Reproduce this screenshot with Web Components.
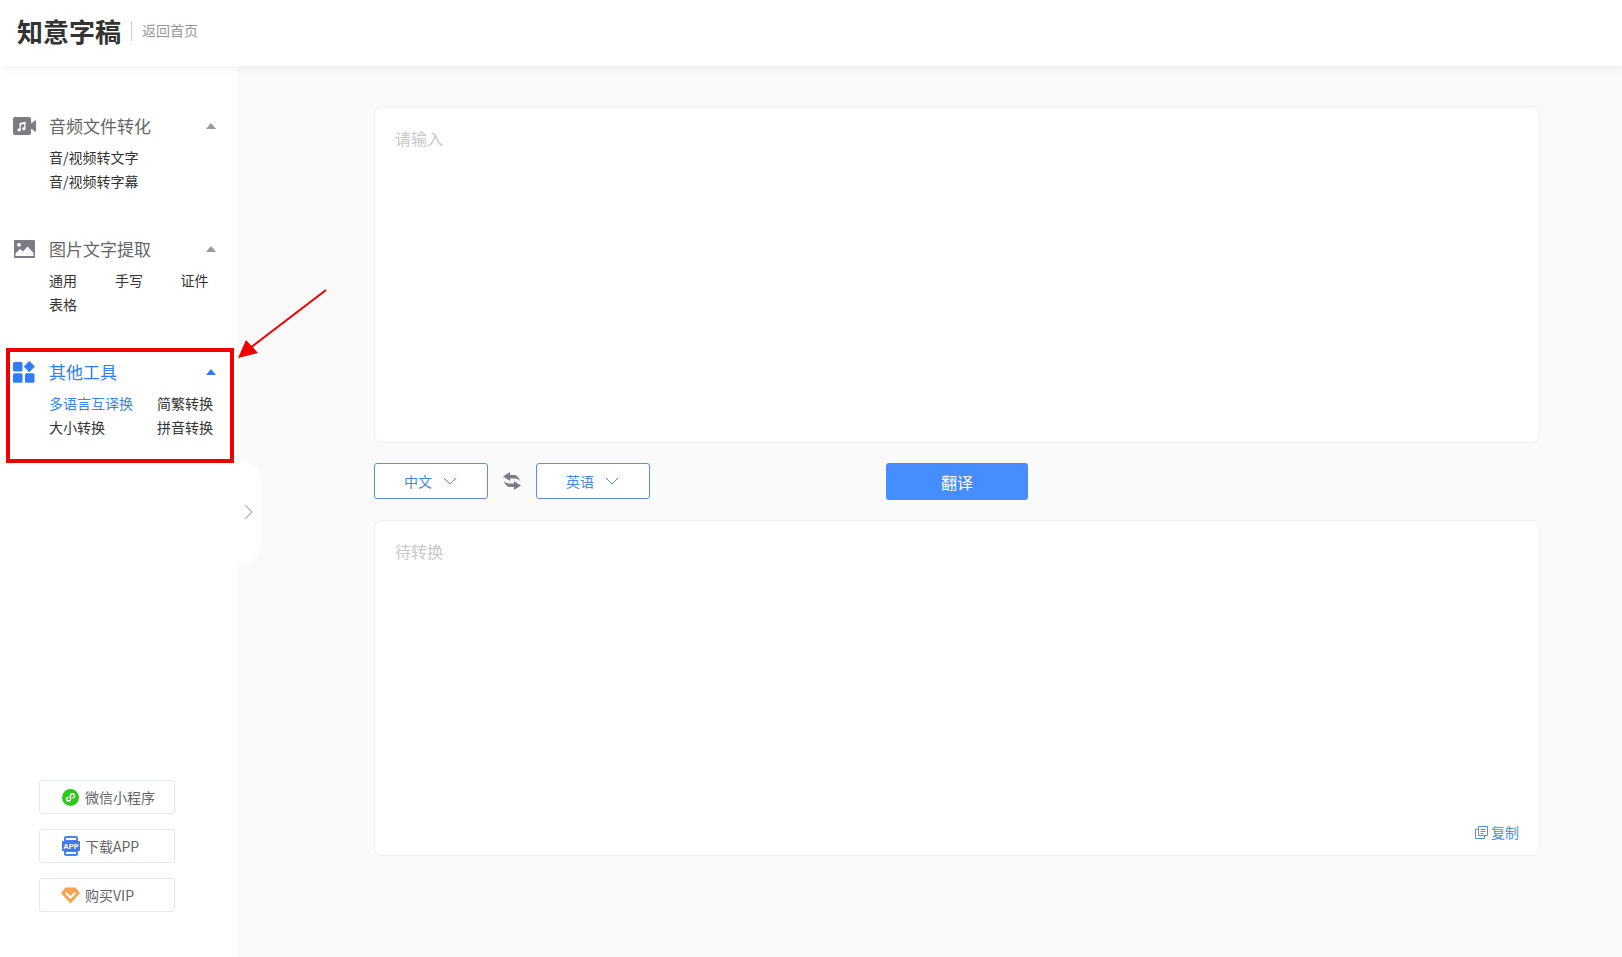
<!DOCTYPE html>
<html lang="zh"><head><meta charset="utf-8"><title>知意字稿</title>
<style>
html,body{margin:0;height:100%;background:#fafafa}
body{font-family:"Noto Sans CJK SC","Liberation Sans",sans-serif;color:#333;overflow:hidden}
</style></head><body>
<app-page></app-page>
<script>
function def(name,html){customElements.define(name,class extends HTMLElement{
  constructor(){super();this.attachShadow({mode:'open'}).innerHTML=html(this);}
});}
const ICONS={
 video:`<svg width="23" height="18" viewBox="0 0 23 18"><path fill="#7c7c87" d="M2 0h14a2 2 0 0 1 2 2v14a2 2 0 0 1-2 2H2a2 2 0 0 1-2-2V2a2 2 0 0 1 2-2z"/><path fill="#7c7c87" d="M17 7 23 3v12l-6-4z"/><path fill="#fff" d="M6.500 6 12.500 4.800v7a1.700 1.500 0 1 1-1.300-1.400V7l-3.400.7v5.300a1.700 1.500 0 1 1-1.300-1.400z"/></svg>`,
 image:`<svg width="21" height="18" viewBox="0 0 21 18"><path fill="#7c7c87" d="M1 0h19a1 1 0 0 1 1 1v16a1 1 0 0 1-1 1H1a1 1 0 0 1-1-1V1a1 1 0 0 1 1-1z"/><path fill="#fff" d="M1.500 16v-2.500l4.500-4.500 3 2.500 4.500-5 6 6.500V16z"/><circle cx="5" cy="4.800" r="1.900" fill="#fff"/></svg>`,
 apps:`<svg width="22" height="22" viewBox="0 0 22 22" fill="#2f7cf6"><rect x="0" y="1" width="9.500" height="9.500" rx="1.500"/><path d="M16.300 0l5.700 5.500-5.700 5.700-5.500-5.700z"/><rect x="0" y="12.200" width="9.500" height="9.500" rx="1.500"/><rect x="12" y="12.200" width="9.500" height="9.500" rx="1.500"/></svg>`,
 wechat:`<svg width="17" height="17" viewBox="0 0 17 17"><circle cx="8.500" cy="8.500" r="8.500" fill="#2dc81c"/><path fill="none" stroke="#fff" stroke-width="1.500" stroke-linecap="round" d="M8.500 7.200v3a2 2 0 1 1-2.400-2M8.500 9.800v-3a2 2 0 1 1 2.400 2"/></svg>`,
 app:`<svg width="18" height="20" viewBox="0 0 18 20"><rect x="2" y="0" width="14" height="20" rx="2" fill="#4a83ee"/><rect x="4" y="2" width="10" height="2" fill="#fff"/><rect x="4" y="16" width="10" height="2" fill="#fff"/><rect x="0" y="5" width="18" height="10" rx="1" fill="#3d7cf0"/><text x="9" y="13" text-anchor="middle" font-family="Liberation Sans" font-weight="700" font-size="7.500" fill="#fff">APP</text></svg>`,
 vip:`<svg width="19" height="17" viewBox="0 0 19 17"><path fill="#f5a34f" d="M4.500.5h10L19 6l-9.500 10.500L0 6z"/><path fill="none" stroke="#fff" stroke-width="2.200" stroke-linecap="round" stroke-linejoin="round" d="M5.500 6.500l4 4 4-4"/></svg>`
};
def('app-logo',()=>`<style>
:host{display:flex;align-items:center;height:66px;padding-left:17px;background:#fff;box-shadow:0 2px 10px rgba(0,0,0,.06);position:relative;z-index:2}
b{font-size:26px;font-weight:700;line-height:1;color:#333;margin-top:-5px}
i{width:1px;height:20px;background:#ccc;margin:-4px 10px 0}
span{font-size:14px;color:#999;margin-top:-6px}
</style><b>知意字稿</b><i></i><span>返回首页</span>`);
def('side-group',h=>`<style>
:host{display:block;height:123px;color:#333}
.t{display:flex;align-items:center;height:24px}
.ic{width:49px;padding-left:13px;box-sizing:border-box;display:flex;align-items:center;margin-top:-2px}
.n{font-size:17px;color:${h.hasAttribute('active')?'#2f7cf6':'#666'};flex:1;line-height:24px;margin-top:-2px}
.c{width:0;height:0;border:5.500px solid transparent;border-bottom:6px solid ${h.hasAttribute('active')?'#2f7cf6':'#999'};border-top:0;margin-right:21px;margin-top:-3px}
.l{display:grid;grid-template-columns:${h.getAttribute('cols')||'180px'};margin:6px 0 0 49px}
</style><div class="t"><div class="ic"><slot name="icon"></slot></div><div class="n">${h.getAttribute('label')}</div><div class="c"></div></div><div class="l"><slot></slot></div>`);
def('side-link',h=>`<style>
:host{display:block;font-size:14px;line-height:24px;height:24px;white-space:nowrap;color:${h.hasAttribute('active')?'#3c83ea':'#333'}}
</style><slot></slot>`);
def('promo-button',()=>`<style>
:host{display:flex;align-items:center;box-sizing:border-box;width:136px;height:34px;border:1px solid #e3e9f3;border-radius:3px;background:#fff;font-size:14px;color:#666;padding-left:22px}
.i{width:23px;display:flex;align-items:center;height:20px}
</style><div class="i"><slot name="icon"></slot></div><slot></slot>`);
def('text-panel',h=>`<style>
:host{display:block;box-sizing:border-box;position:relative;background:#fff;border:1px solid #f0f0f0;border-radius:8px;padding:18px 20px;font-size:16px;line-height:24px;color:#c8c8c8}
</style>${h.getAttribute('placeholder')}<slot></slot>`);
def('lang-select',()=>`<style>
:host{display:flex;align-items:center;justify-content:center;box-sizing:border-box;width:114px;height:36px;border:1px solid #5b90d8;border-radius:3px;background:#fff;font-size:14px;color:#4a86e0}
svg{margin:0 1px 0 11px}
</style><slot></slot><svg width="14" height="8" viewBox="0 0 14 8"><path d="M1 1l6 6 6-6" fill="none" stroke="#5b90d8" stroke-width="1"/></svg>`);
def('app-page',()=>`<style>
:host{display:grid;grid-template-rows:66px 1fr;height:957px;position:relative}
.body{display:grid;grid-template-columns:237px 1fr;min-height:0}
aside{background:#fff;padding-top:49px;display:flex;flex-direction:column;position:relative;box-sizing:border-box;height:891px}
.promos{margin-top:auto;padding:0 0 45px 39px;display:flex;flex-direction:column;gap:15px}
.tab{position:absolute;left:237px;top:396px;width:24px;height:100px;background:#fff;border-radius:0 16px 16px 0;display:flex;align-items:center;justify-content:center}
main{padding:40px 0 0 137px}
text-panel.a{width:1166px;height:337px;padding-top:19px}
text-panel.b{width:1166px;height:336px;margin-top:20px}
.row{display:flex;align-items:flex-start;margin-top:20px;height:37px}
.swap{width:48px;height:36px;display:flex;align-items:center;justify-content:center}
.go{margin-left:236px;width:142px;height:37px;border-radius:3px;background:#468dff;color:#fff;font-size:16px;display:flex;align-items:center;justify-content:center}
.copy{position:absolute;right:20px;bottom:13px;display:flex;align-items:center;gap:3px;font-size:14px;line-height:20px;color:#4a90e8}
.box{position:absolute;left:6px;top:348px;width:228px;height:115px;box-sizing:border-box;border:4px solid #ee0000;pointer-events:none}
.arrow{position:absolute;left:232px;top:285px;pointer-events:none}
</style>
<app-logo></app-logo>
<div class="body"><aside>
<side-group label="音频文件转化"><span slot="icon" style="display:flex">${ICONS.video}</span>
  <side-link>音/视频转文字</side-link><side-link>音/视频转字幕</side-link></side-group>
<side-group label="图片文字提取" cols="66px 65.5px 66px"><span slot="icon" style="display:flex;margin-left:1px">${ICONS.image}</span>
  <side-link>通用</side-link><side-link>手写</side-link><side-link>证件</side-link><side-link>表格</side-link></side-group>
<side-group label="其他工具" cols="108px 60px" active><span slot="icon" style="display:flex">${ICONS.apps}</span>
  <side-link active>多语言互译换</side-link><side-link>简繁转换</side-link><side-link>大小转换</side-link><side-link>拼音转换</side-link></side-group>
<div class="promos">
<promo-button><span slot="icon" style="display:flex">${ICONS.wechat}</span>微信小程序</promo-button>
<promo-button><span slot="icon" style="display:flex">${ICONS.app}</span>下载APP</promo-button>
<promo-button><span slot="icon" style="display:flex;margin-left:-1px">${ICONS.vip}</span>购买VIP</promo-button>
</div>
<div class="tab"><svg width="10" height="16" viewBox="0 0 10 16"><path d="M1 1l7 7-7 7" fill="none" stroke="#b5b5b5" stroke-width="1.200"/></svg></div>
</aside>
<main>
<text-panel class="a" placeholder="请输入"></text-panel>
<div class="row"><lang-select>中文</lang-select>
<div class="swap"><svg width="18" height="18" viewBox="0 0 18 18" fill="#7c7c87"><path d="M7 0 0 4.500 7 9V6.500h5c2 0 3.500 1 5 2.500C16 5.500 14 3 11 3H7z"/><path transform="rotate(180 9 9)" d="M7 0 0 4.500 7 9V6.500h5c2 0 3.500 1 5 2.500C16 5.500 14 3 11 3H7z"/></svg></div>
<lang-select>英语</lang-select><div class="go">翻译</div></div>
<text-panel class="b" placeholder="待转换"><div class="copy"><svg width="13" height="13" viewBox="0 0 13 13" fill="none" stroke="#5b90d8"><path d="M3.500.5h9v9h-9zM3.500 3h-3v9.500h9v-3M5.500 3.500h5M5.500 5.500h5M5.500 7.500h3"/></svg>复制</div></text-panel>
</main></div>
<div class="box"></div>
<svg class="arrow" width="100" height="80" viewBox="0 0 100 80"><path d="M94 5 18 63" stroke="#ee0000" stroke-width="2" fill="none"/><path d="M6 73 14 55 26 68z" fill="#ee0000"/></svg>`);
</script></body></html>
